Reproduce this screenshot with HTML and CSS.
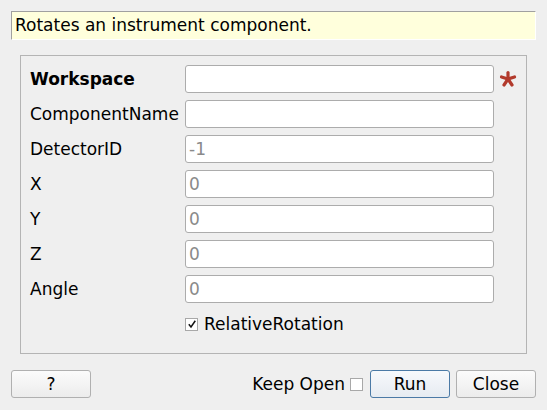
FILE: index.html
```html
<!DOCTYPE html>
<html>
<head>
<meta charset="utf-8">
<link rel="stylesheet" href="styles.css">
</head>
<body>
<div class="desc">Rotates an instrument component.</div>
<div class="group">
  <div class="form">
    <label class="lbl bold">Workspace</label>
    <div class="field"></div>
    <svg class="star" width="18" height="18" viewBox="-9 -9 18 18"><g stroke="#b23a2c" stroke-width="3.2" stroke-linecap="round"><line x1="0" y1="0" x2="0" y2="-6.5"/><line x1="0" y1="0" x2="-6.5" y2="-2"/><line x1="0" y1="0" x2="6.5" y2="-2"/><line x1="0" y1="0" x2="-4" y2="6"/><line x1="0" y1="0" x2="4" y2="6"/></g></svg>
    <label class="lbl">ComponentName</label>
    <div class="field"></div>
    <span></span>
    <label class="lbl">DetectorID</label>
    <div class="field ph">-1</div>
    <span></span>
    <label class="lbl">X</label>
    <div class="field ph">0</div>
    <span></span>
    <label class="lbl">Y</label>
    <div class="field ph">0</div>
    <span></span>
    <label class="lbl">Z</label>
    <div class="field ph">0</div>
    <span></span>
    <label class="lbl">Angle</label>
    <div class="field ph">0</div>
    <span></span>
    <span></span>
    <div class="check-row"><span class="cb checked"><svg width="10" height="10" viewBox="0 0 10 10"><path d="M1.8 5.2 L4 8 L8.3 1.8" fill="none" stroke="#111" stroke-width="1.5"/></svg></span>RelativeRotation</div>
    <span></span>
  </div>
</div>
<div class="bottom">
  <button class="btn">?</button>
  <div class="spacer"></div>
  <span class="keep">Keep Open</span>
  <span class="cb"></span>
  <button class="btn default">Run</button>
  <button class="btn">Close</button>
</div>
</body>
</html>
```
FILE: styles.css
```css
html, body {
  margin: 0;
  padding: 0;
}
body {
  width: 547px;
  height: 410px;
  background: #efefef;
  font-family: "DejaVu Sans", "Liberation Sans", sans-serif;
  font-size: 17px;
  color: #000;
  overflow: hidden;
}
.desc {
  margin: 11px 11px 0 11px;
  height: 27px;
  line-height: 27px;
  padding-left: 3px;
  background: #ffffdc;
  border-top: 1px solid #a0a0a0;
  border-left: 1px solid #a0a0a0;
  border-right: 1px solid #ffffff;
  border-bottom: 1px solid #ffffff;
  box-sizing: content-box;
  width: 520px;
}
.group {
  margin: 15px 20px 0 20px;
  height: 299px;
  border: 1px solid #b4b4b4;
  padding: 9px 0 0 9px;
  box-sizing: border-box;
}
.form {
  display: grid;
  grid-template-columns: 155px 309px 24px;
  grid-auto-rows: 28px;
  row-gap: 7px;
  align-items: center;
}
.lbl {
  line-height: 28px;
  white-space: nowrap;
}
.bold {
  font-weight: bold;
}
.field {
  height: 28px;
  box-sizing: border-box;
  background: #fff;
  border: 1px solid #acacac;
  border-radius: 3px;
  padding-left: 3px;
  line-height: 26px;
}
.ph {
  color: #8a8a8a;
}
.star {
  justify-self: center;
  margin-left: 4px;
}
.check-row {
  display: flex;
  align-items: center;
  gap: 6px;
  line-height: 20px;
}
.cb {
  display: inline-flex;
  align-items: center;
  justify-content: center;
  width: 13px;
  height: 13px;
  box-sizing: border-box;
  border: 1px solid #a8a8a8;
  background: #fff;
}
.bottom {
  display: flex;
  align-items: center;
  margin: 16px 11px 0 11px;
  height: 28px;
}
.spacer {
  flex: 1;
}
.btn {
  width: 80px;
  height: 28px;
  box-sizing: border-box;
  border: 1px solid #b0b0b0;
  border-radius: 3px;
  background: linear-gradient(#fbfbfb, #ececec);
  font-family: "DejaVu Sans", "Liberation Sans", sans-serif;
  font-size: 17px;
  color: #000;
  padding: 0;
  margin: 0;
}
.btn.default {
  border-color: #4b7aa6;
  background: linear-gradient(#f7f9fc, #e6ebf1);
  margin-left: 7px;
  margin-right: 6px;
}
.keep {
  margin-right: 5px;
}
```
